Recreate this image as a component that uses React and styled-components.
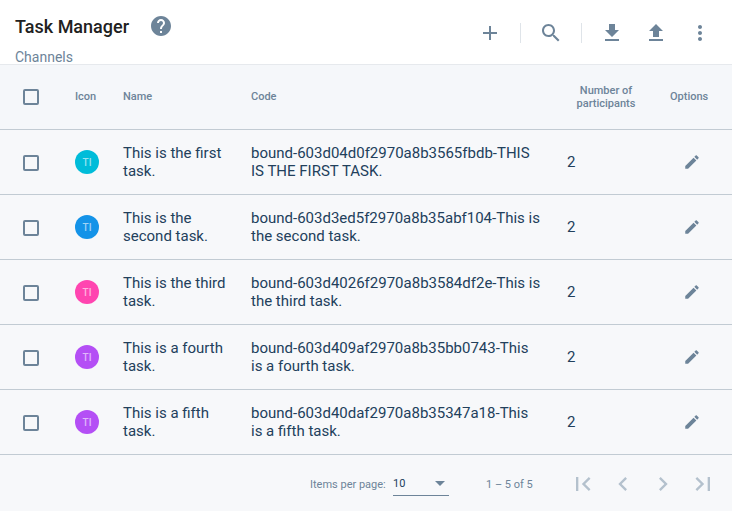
import React from "react";
import styled, { createGlobalStyle } from "styled-components";

const GlobalStyle = createGlobalStyle`
    html, body {
        margin: 0;
        padding: 0;
        background: #fff;
        font-family: Roboto, "Liberation Sans", sans-serif;
    }
`;

const paths = {
    add: "M19 13h-6v6h-2v-6H5v-2h6V5h2v6h6v2z",
    search: "M15.5 14h-.79l-.28-.27C15.41 12.59 16 11.11 16 9.5 16 5.91 13.09 3 9.5 3S3 5.91 3 9.5 5.91 16 9.5 16c1.61 0 3.09-.59 4.23-1.57l.27.28v.79l5 4.99L20.49 19l-4.99-5zm-6 0C7.01 14 5 11.99 5 9.5S7.01 5 9.5 5 14 7.01 14 9.5 11.99 14 9.5 14z",
    download: "M19 9h-4V3H9v6H5l7 7 7-7zM5 18v2h14v-2H5z",
    upload: "M9 16h6v-6h4l-7-7-7 7h4v6zm-4 2h14v2H5v-2z",
    more: "M12 8c1.1 0 2-.9 2-2s-.9-2-2-2-2 .9-2 2 .9 2 2 2zm0 2c-1.1 0-2 .9-2 2s.9 2 2 2 2-.9 2-2-.9-2-2-2zm0 6c-1.1 0-2 .9-2 2s.9 2 2 2 2-.9 2-2-.9-2-2-2z",
    help: "M12 2C6.48 2 2 6.48 2 12s4.48 10 10 10 10-4.48 10-10S17.52 2 12 2zm1 17h-2v-2h2v2zm2.07-7.75l-.9.92C13.45 12.9 13 13.5 13 15h-2v-.5c0-1.1.45-2.1 1.17-2.83l1.24-1.26c.37-.36.59-.86.59-1.41 0-1.1-.9-2-2-2s-2 .9-2 2H8c0-2.21 1.79-4 4-4s4 1.79 4 4c0 .88-.36 1.68-.93 2.25z",
    edit: "M3 17.25V21h3.75L17.81 9.94l-3.75-3.75L3 17.25zM20.71 7.04c.39-.39.39-1.02 0-1.41l-2.34-2.34c-.39-.39-1.02-.39-1.41 0l-1.83 1.83 3.75 3.75 1.83-1.83z",
    first: "M18.41 16.59L13.82 12l4.59-4.59L17 6l-6 6 6 6zM6 6h2v12H6z",
    prev: "M15.41 7.41L14 6l-6 6 6 6 1.41-1.41L10.83 12z",
    next: "M10 6L8.59 7.41 13.17 12l-4.58 4.59L10 18l6-6z",
    last: "M5.59 7.41L10.18 12l-4.59 4.59L7 18l6-6-6-6zM16 6h2v12h-2z",
};

const Icon = ({ name, size = 24, color = "#6d8499" }) => (
    <svg width={size} height={size} viewBox="0 0 24 24" fill={color} style={{ display: "block" }}>
        <path d={paths[name]} />
    </svg>
);

const tasks = [
    { name: "This is the first task.", code: "bound-603d04d0f2970a8b3565fbdb-THIS IS THE FIRST TASK.", color: "#00bcd9" },
    { name: "This is the second task.", code: "bound-603d3ed5f2970a8b35abf104-This is the second task.", color: "#1493e8" },
    { name: "This is the third task.", code: "bound-603d4026f2970a8b3584df2e-This is the third task.", color: "#ff45b0" },
    { name: "This is a fourth task.", code: "bound-603d409af2970a8b35bb0743-This is a fourth task.", color: "#b44ff5" },
    { name: "This is a fifth task.", code: "bound-603d40daf2970a8b35347a18-This is a fifth task.", color: "#b44ff5" },
];

export default function App() {
    return (
        <Page>
            <GlobalStyle />
            <Header>
                <TitleRow>
                    <Title>Task Manager</Title>
                    <Icon name="help" size={24} />
                </TitleRow>
                <Subtitle>Channels</Subtitle>
                <Toolbar>
                    <ToolButton><Icon name="add" /></ToolButton>
                    <Divider />
                    <ToolButton><Icon name="search" /></ToolButton>
                    <Divider />
                    <ToolButton><Icon name="download" /></ToolButton>
                    <ToolButton $wide><Icon name="upload" /></ToolButton>
                    <ToolButton $wide><Icon name="more" /></ToolButton>
                </Toolbar>
            </Header>
            <HeadRow>
                <Checkbox />
                <HeadCell>Icon</HeadCell>
                <HeadCell>Name</HeadCell>
                <HeadCell>Code</HeadCell>
                <ParticipantsHead>Number of participants</ParticipantsHead>
                <HeadCell>Options</HeadCell>
            </HeadRow>
            {tasks.map((task) => (
                <Row key={task.code}>
                    <RowCheckbox />
                    <Avatar $color={task.color}>TI</Avatar>
                    <NameCell>{task.name}</NameCell>
                    <CodeCell>{task.code}</CodeCell>
                    <Cell>2</Cell>
                    <EditButton><Icon name="edit" size={18} /></EditButton>
                </Row>
            ))}
            <Footer>
                <PageLabel>Items per page:</PageLabel>
                <PageSelect>
                    <span>10</span>
                    <Caret />
                </PageSelect>
                <PageRange>1 – 5 of 5</PageRange>
                <PageButtons>
                    <Icon name="first" size={28} color="#b4c1cd" />
                    <Icon name="prev" size={28} color="#b4c1cd" />
                    <Icon name="next" size={28} color="#b4c1cd" />
                    <Icon name="last" size={28} color="#b4c1cd" />
                </PageButtons>
            </Footer>
        </Page>
    );
}

const Page = styled.div`
    width: 732px;
    height: 511px;
    background: #f7f8fa;
`;
const Header = styled.header`
    display: grid;
    grid-template-columns: 1fr auto;
    grid-template-rows: 36px 1fr;
    height: 65px;
    box-sizing: border-box;
    padding: 14px 20px 0 15px;
    background: #fff;
    border-bottom: 1px solid #e6e9ed;
`;
const TitleRow = styled.div`
    display: flex;
    align-items: center;
    gap: 20px;
    height: 24px;
`;
const Title = styled.h1`
    margin: 0;
    font-size: 18px;
    font-weight: 500;
    color: #212121;
`;
const Subtitle = styled.div`
    grid-row: 2;
    font-size: 14px;
    line-height: 14px;
    color: #6d8499;
`;
const Toolbar = styled.div`
    grid-row: 1 / 3;
    grid-column: 2;
    display: flex;
    align-items: flex-start;
    padding-top: 7px;
`;
const ToolButton = styled.div`
    margin-left: ${(p) => (p.$wide ? "20px" : "0")};
`;
const Divider = styled.div`
    width: 1px;
    height: 20px;
    margin: 2px 18px;
    background: #dfe4e9;
`;
const rowColumns = `
    display: grid;
    grid-template-columns: 52px 48px 128px 316px 103px 1fr;
    align-items: center;
    box-sizing: border-box;
    padding-left: 23px;
    height: 65px;
`;
const HeadRow = styled.div`
    ${rowColumns}
    background: #f5f7fa;
    border-bottom: 1px solid #c2cbd3;
`;
const HeadCell = styled.div`
    padding-bottom: 2px;
    font-size: 11px;
    font-weight: 500;
    line-height: 13px;
    color: #6d8499;
`;
const ParticipantsHead = styled(HeadCell)`
    width: 60px;
    margin-left: 9px;
    padding-bottom: 0;
    text-align: center;
`;
const Row = styled.div`
    ${rowColumns}
    border-bottom: 1px solid #c2cbd3;
`;
const Checkbox = styled.div`
    width: 16px;
    height: 16px;
    box-sizing: border-box;
    border: 2px solid #6d8499;
    border-radius: 2px;
`;
const RowCheckbox = styled(Checkbox)`
    margin-top: 2px;
`;
const Avatar = styled.div`
    display: flex;
    align-items: center;
    justify-content: center;
    width: 24px;
    height: 24px;
    border-radius: 50%;
    background: ${(p) => p.$color};
    color: rgba(255, 255, 255, 0.6);
    font-size: 10px;
    font-weight: 500;
`;
const Cell = styled.div`
    font-size: 15px;
    line-height: 18px;
    color: #22405c;
`;
const NameCell = styled(Cell)`
    padding-right: 16px;
`;
const CodeCell = styled(Cell)`
    padding-right: 24px;
`;
const EditButton = styled.div`
    padding-left: 13px;
`;
const Footer = styled.footer`
    display: flex;
    align-items: center;
    height: 56px;
    padding: 2px 0 0 310px;
    box-sizing: border-box;
    font-size: 11px;
    color: #6d8499;
`;
const PageLabel = styled.div`
    width: 83px;
`;
const PageSelect = styled.div`
    display: flex;
    align-items: center;
    justify-content: space-between;
    box-sizing: border-box;
    width: 56px;
    height: 24px;
    padding: 0 4px 0 0;
    border-bottom: 1px solid #6d8499;
    color: #22405c;
`;
const Caret = styled.div`
    width: 0;
    height: 0;
    border-left: 5px solid transparent;
    border-right: 5px solid transparent;
    border-top: 5px solid #6d8499;
`;
const PageRange = styled.div`
    margin-left: 37px;
    width: 46px;
    white-space: nowrap;
`;
const PageButtons = styled.div`
    display: flex;
    gap: 12px;
    margin-left: 37px;
`;
